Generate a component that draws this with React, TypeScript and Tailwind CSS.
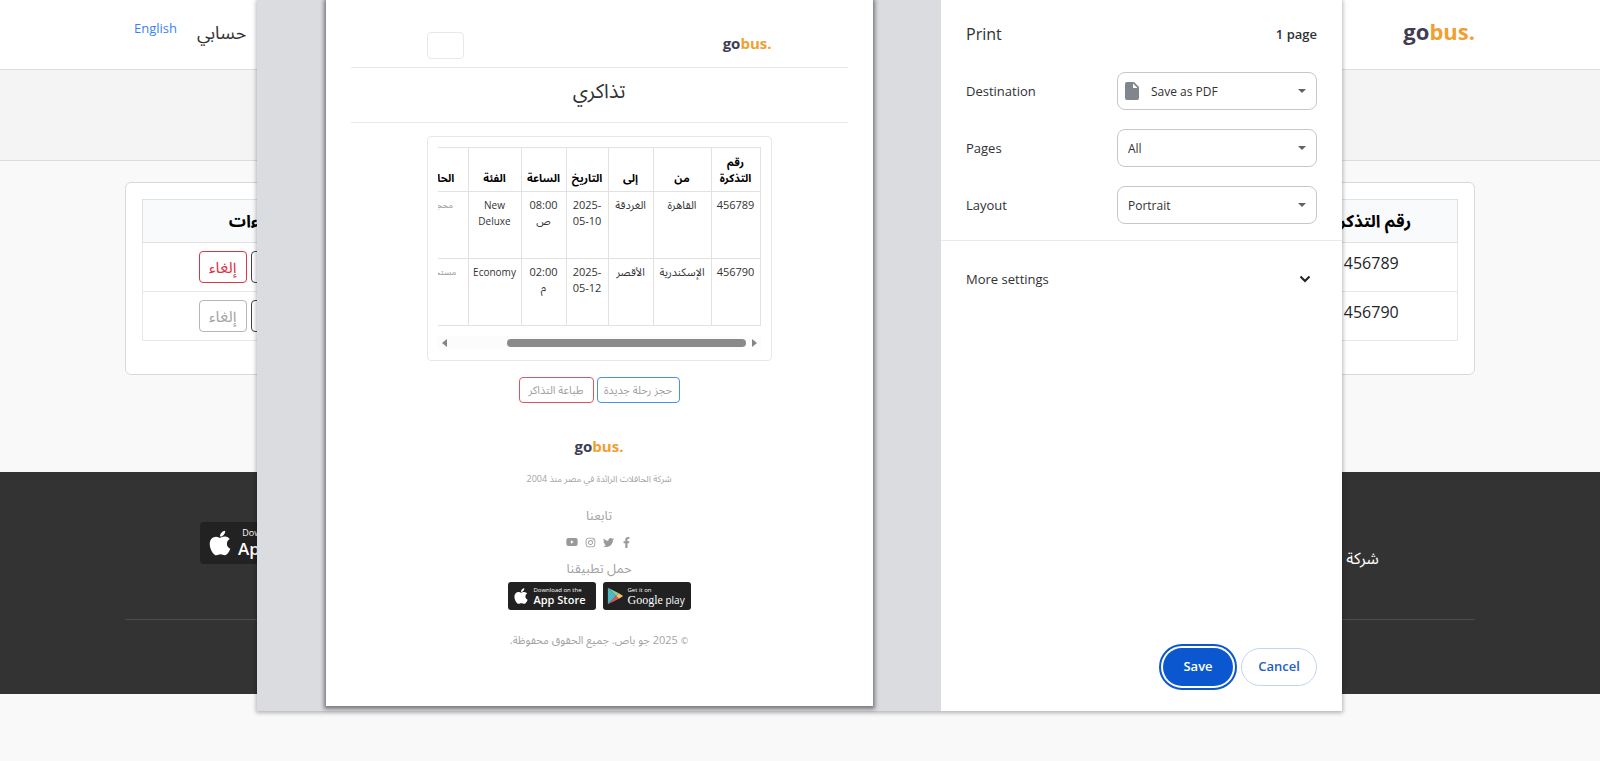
import React from "react";
import { FaApple, FaFacebookF, FaInstagram, FaTwitter, FaYoutube } from "react-icons/fa";

const tickets = [
  { id: "456789", from: "القاهرة", to: "الغردقة", date: "2025-05-10", time: "08:00 ص", category: "New Deluxe", status: "محجوز", cancellable: true },
  { id: "456790", from: "الإسكندرية", to: "الأقصر", date: "2025-05-12", time: "02:00 م", category: "Economy", status: "مستخدم", cancellable: false },
];

const headings = ["رقم التذكرة", "من", "إلى", "التاريخ", "الساعة", "الفئة", "الحالة"];

function Logo({ small = false }: { small?: boolean }) {
  return (
    <span
      dir="ltr"
      className={
        small
          ? "block font-['Open_Sans'] text-[15px] leading-[22px] font-bold text-[#3f3d56]"
          : "block font-['Open_Sans'] text-[22px] leading-[30px] font-bold text-[#3f3d56]"
      }
    >
      go<span className="text-[#f0a030]">bus.</span>
    </span>
  );
}

function PlayMark({ className }: { className: string }) {
  return (
    <svg viewBox="0 0 24 26" className={className} aria-hidden="true">
      <path d="M1 1v24l12-12z" fill="#4fb8c4" />
      <path d="M1 1l12 12 4-4z" fill="#7ed0a0" />
      <path d="M1 25l12-12 4 4z" fill="#e0565b" />
      <path d="M17 9l6 4-6 4-4-4z" fill="#f5c26b" />
    </svg>
  );
}

function StoreBadge({ store, small = false }: { store: "apple" | "google"; small?: boolean }) {
  const apple = store === "apple";
  return (
    <a
      href="#"
      dir="ltr"
      className={
        small
          ? "flex h-7 w-[88px] items-center gap-1 rounded-[3px] bg-[#212121] pl-1 text-white"
          : "flex h-[42px] w-[136px] items-center gap-1 rounded bg-[#222] pl-[6px] text-white"
      }
    >
      {apple ? (
        <FaApple className={small ? "size-[18px] shrink-0" : "size-7 shrink-0"} />
      ) : (
        <PlayMark className={small ? "h-[18px] w-[17px] shrink-0" : "h-7 w-6 shrink-0"} />
      )}
      <span className="flex flex-col whitespace-nowrap">
        <span className={small ? "text-[6px] leading-[8px]" : "text-[9px] leading-3"}>
          {apple ? "Download on the" : "Get it on"}
        </span>
        {apple ? (
          <span className={small ? "text-[11px] leading-3 font-semibold" : "text-[17px] leading-5 font-semibold"}>App Store</span>
        ) : (
          <span className={small ? "text-[10px] leading-3" : "text-[17px] leading-5"}>
            <span className={small ? "font-['Liberation_Serif'] text-xs leading-3" : "font-['Liberation_Serif']"}>Google</span> play
          </span>
        )}
      </span>
    </a>
  );
}

function SitePage() {
  return (
    <div dir="rtl" className="min-h-screen bg-[#f9f9f9] text-[#212529]">
      <header className="border-b border-[#dcdcdc] bg-white">
        <div className="mx-auto flex h-[69px] w-27/32 items-start justify-between">
          <a href="#" className="pt-4">
            <Logo />
          </a>
          <nav className="flex items-start gap-5 pl-[9px]">
            <a href="#" className="pt-5 text-lg leading-6 text-[#333]">حسابي</a>
            <a href="#" className="pt-4 text-[13px] leading-6 text-[#3b82f6]">English</a>
          </nav>
        </div>
      </header>
      <div className="h-[91px] border-b border-[#dcdcdc] bg-[#f4f4f4]" />

      <main className="mx-auto w-27/32 pt-[21px] pb-[97px]">
        <section className="rounded-md border border-[#d9d9d9] bg-white px-4 pt-4 pb-[33px]">
          <table className="w-full table-fixed border-collapse text-center text-base">
            <colgroup>
              <col className="w-[172px]" />
              <col span={6} />
              <col className="w-[240px]" />
            </colgroup>
            <thead className="bg-[#f8fafc] text-[17px] text-black">
              <tr className="h-[43px] border border-[#dee2e6]">
                <th className="font-bold">{headings[0]}</th>
                {headings.slice(1).map((h) => (
                  <th key={h} className="invisible font-bold">{h}</th>
                ))}
                <th className="font-bold">الإجراءات</th>
              </tr>
            </thead>
            <tbody>
              {tickets.map((t) => (
                <tr key={t.id} className="h-[49px] border border-[#e6e8ea]">
                  <td className="pb-2">{t.id}</td>
                  <td className="invisible">{t.from}</td>
                  <td className="invisible">{t.to}</td>
                  <td className="invisible">{t.date}</td>
                  <td className="invisible">{t.time}</td>
                  <td className="invisible">{t.category}</td>
                  <td className="invisible">{t.status}</td>
                  <td>
                    <div className="flex justify-center gap-1">
                      <button type="button" aria-label="التفاصيل" className="h-8 w-[76px] rounded border border-[#444]" />
                      <button
                        type="button"
                        disabled={!t.cancellable}
                        className="h-8 w-12 rounded border border-[#dc3545] text-base leading-6 text-[#dc3545] disabled:border-[#b5b5b5] disabled:text-[#a5a5a5]"
                      >
                        إلغاء
                      </button>
                    </div>
                  </td>
                </tr>
              ))}
            </tbody>
          </table>
        </section>
      </main>

      <footer className="bg-[#333] text-white">
        <div className="mx-auto w-27/32 pt-8 pb-[74px]">
          <div className="grid h-[115px] grid-cols-3 text-center">
            <div className="pt-3">
              <Logo />
              <p className="text-base leading-6">شركة الحافلات الرائدة في مصر منذ 2004</p>
            </div>
            <div />
            <div className="flex justify-center gap-7 pt-[18px]">
              <StoreBadge store="google" />
              <StoreBadge store="apple" />
            </div>
          </div>
          <hr className="border-[#4d4d4d]" />
        </div>
      </footer>
    </div>
  );
}

function TicketPrintout() {
  return (
    <div
      dir="rtl"
      className="flex w-[547px] flex-col bg-white px-[25px] pt-8 pb-[57px] text-[#333] shadow-[0_1px_4px_2px_rgba(0,0,0,0.45)]"
    >
      <div className="border-b border-[#e8e8e8] px-[76px] pb-2">
        <div className="flex items-start justify-between">
          <Logo small />
          <span className="h-[27px] w-[37px] rounded border border-[#e8e8e8]" />
        </div>
      </div>
      <h1 className="border-b border-[#e8e8e8] pt-2 pb-4 text-center text-xl leading-[30px]">تذاكري</h1>

      <div className="mx-[76px] mt-[13px] rounded border border-[#e8e8e8] p-[10px]">
        <div className="overflow-hidden">
          <table className="w-[346px] table-fixed border-collapse text-center text-[11px] leading-4">
            <colgroup>
              <col className="w-[49px]" />
              <col className="w-[58px]" />
              <col className="w-[45px]" />
              <col className="w-[42px]" />
              <col className="w-[45px]" />
              <col className="w-[53px]" />
              <col className="w-[54px]" />
            </colgroup>
            <thead>
              <tr className="h-11">
                {headings.map((h) => (
                  <th key={h} className="border border-[#e2e2e2] px-0 pb-[5px] align-bottom font-bold text-black first:px-1">{h}</th>
                ))}
              </tr>
            </thead>
            <tbody>
              {tickets.map((t) => (
                <tr key={t.id} className="h-[67px] align-top">
                  <td className="border border-[#e2e2e2] pt-[5px]">{t.id}</td>
                  <td className="border border-[#e2e2e2] pt-[5px]">{t.from}</td>
                  <td className="border border-[#e2e2e2] pt-[5px]">{t.to}</td>
                  <td className="border border-[#e2e2e2] px-1 pt-[5px]">{t.date}</td>
                  <td className="border border-[#e2e2e2] px-1 pt-[5px]">{t.time}</td>
                  <td className="border border-[#e2e2e2] pt-[5px] text-[10px]">{t.category}</td>
                  <td className="border border-[#e2e2e2] pt-[5px] text-[9px] text-[#999]">{t.status}</td>
                </tr>
              ))}
            </tbody>
          </table>
        </div>
        <div dir="ltr" className="mt-[10px] flex h-[14px] items-center bg-[#fcfcfc] px-1">
          <span className="border-y-4 border-r-[5px] border-y-transparent border-r-[#858585]" />
          <span className="ml-auto h-2 w-[239px] rounded-full bg-[#8a8a8a]" />
          <span className="ml-[6px] border-y-4 border-l-[5px] border-y-transparent border-l-[#858585]" />
        </div>
      </div>

      <div className="mt-4 flex justify-center gap-[3px] text-[11px] leading-4 text-[#a0a0a0]">
        <button type="button" className="h-[26px] w-[83px] rounded border border-[#4a8fe8]">حجز رحلة جديدة</button>
        <button type="button" className="h-[26px] w-[75px] rounded border border-[#dc5560]">طباعة التذاكر</button>
      </div>

      <div className="flex flex-col items-center pt-8 text-[#a3a3a3]">
        <Logo small />
        <p className="pt-[14px] text-[9px] leading-4">شركة الحافلات الرائدة في مصر منذ 2004</p>
        <h2 className="pt-[18px] text-[13px] leading-5">تابعنا</h2>
        <div className="flex items-center gap-[7px] pt-[11px] text-[#999]">
          <FaFacebookF className="size-[11px]" />
          <FaTwitter className="size-[11px]" />
          <FaInstagram className="size-[11px]" />
          <FaYoutube className="size-3" />
        </div>
        <h2 className="pt-[10px] text-[13px] leading-5">حمل تطبيقنا</h2>
        <div className="flex gap-[7px] pt-1">
          <StoreBadge store="google" small />
          <StoreBadge store="apple" small />
        </div>
        <p className="pt-[22px] text-[11px] leading-4">
          <span className="text-[9px]">©</span> 2025 جو باص. جميع الحقوق محفوظة.
        </p>
      </div>
    </div>
  );
}

function Field({ id, label, options, icon = false }: { id: string; label: string; options: string[]; icon?: boolean }) {
  return (
    <div className="flex items-center justify-between">
      <label htmlFor={id} className="pt-[2px]">{label}</label>
      <div className="relative w-[200px]">
        {icon && (
          <svg viewBox="0 0 14 18" className="absolute top-[10px] left-2 h-[18px] w-[14px]" aria-hidden="true">
            <path d="M2 0h7l5 5v11a2 2 0 0 1-2 2H2a2 2 0 0 1-2-2V2a2 2 0 0 1 2-2z" fill="#80868b" />
            <path d="M8 1.500v4.500h4.500z" fill="#fff" />
          </svg>
        )}
        <select
          id={id}
          className={
            icon
              ? "block h-[38px] w-full appearance-none rounded-lg border border-[#c7c7c7] bg-transparent pt-[2px] pr-8 pl-[33px] text-xs"
              : "block h-[38px] w-full appearance-none rounded-lg border border-[#c7c7c7] bg-transparent pt-[2px] pr-8 pl-[10px] text-xs"
          }
        >
          {options.map((o) => (
            <option key={o}>{o}</option>
          ))}
        </select>
        <svg viewBox="0 0 8 4" className="pointer-events-none absolute top-[17px] right-[11px] h-1 w-2" aria-hidden="true">
          <path d="M0 0h8L4 4z" fill="#5f6368" />
        </svg>
      </div>
    </div>
  );
}

function PrintSettings() {
  return (
    <div className="flex flex-1 flex-col bg-white text-[13px] text-[#303134]">
      <div className="flex items-center justify-between px-[25px] pt-[22px] leading-6">
        <h2 className="text-base leading-6">Print</h2>
        <span className="font-semibold">1 page</span>
      </div>
      <div className="flex flex-col gap-[19px] border-b border-[#e8eaed] px-[25px] pt-[26px] pb-4">
        <Field id="destination" label="Destination" options={["Save as PDF"]} icon />
        <Field id="pages" label="Pages" options={["All"]} />
        <Field id="layout" label="Layout" options={["Portrait", "Landscape"]} />
      </div>
      <button type="button" className="flex items-center justify-between py-7 pr-[31px] pl-[25px] leading-5">
        More settings
        <svg viewBox="0 0 12 8" className="h-2 w-3" aria-hidden="true">
          <path d="M1.500 1.500L6 6l4.500-4.500" fill="none" stroke="#202124" strokeWidth="2" />
        </svg>
      </button>
      <div className="mt-auto flex justify-end gap-2 px-[25px] pb-[25px] font-semibold">
        <button
          type="button"
          className="h-[38px] w-[70px] rounded-full bg-[#0b57d0] text-white outline-2 outline-offset-2 outline-[#0b57d0]"
        >
          Save
        </button>
        <button type="button" className="h-[38px] w-[76px] rounded-full border border-[#c2d5f5] text-[#2260c8]">Cancel</button>
      </div>
    </div>
  );
}

export default function App() {
  return (
    <div className="relative font-['Open_Sans','Noto_Sans_Arabic','DejaVu_Sans',sans-serif]">
      <SitePage />
      <div className="absolute inset-x-0 top-0 flex justify-center pr-px">
        <div
          role="dialog"
          aria-label="Print"
          className="flex w-[1085px] shadow-[0_1px_4px_1px_rgba(0,0,0,0.28)]"
        >
          <div className="flex w-[684px] items-start justify-center bg-[#dadce0] pb-[5px]">
            <TicketPrintout />
          </div>
          <PrintSettings />
        </div>
      </div>
    </div>
  );
}
